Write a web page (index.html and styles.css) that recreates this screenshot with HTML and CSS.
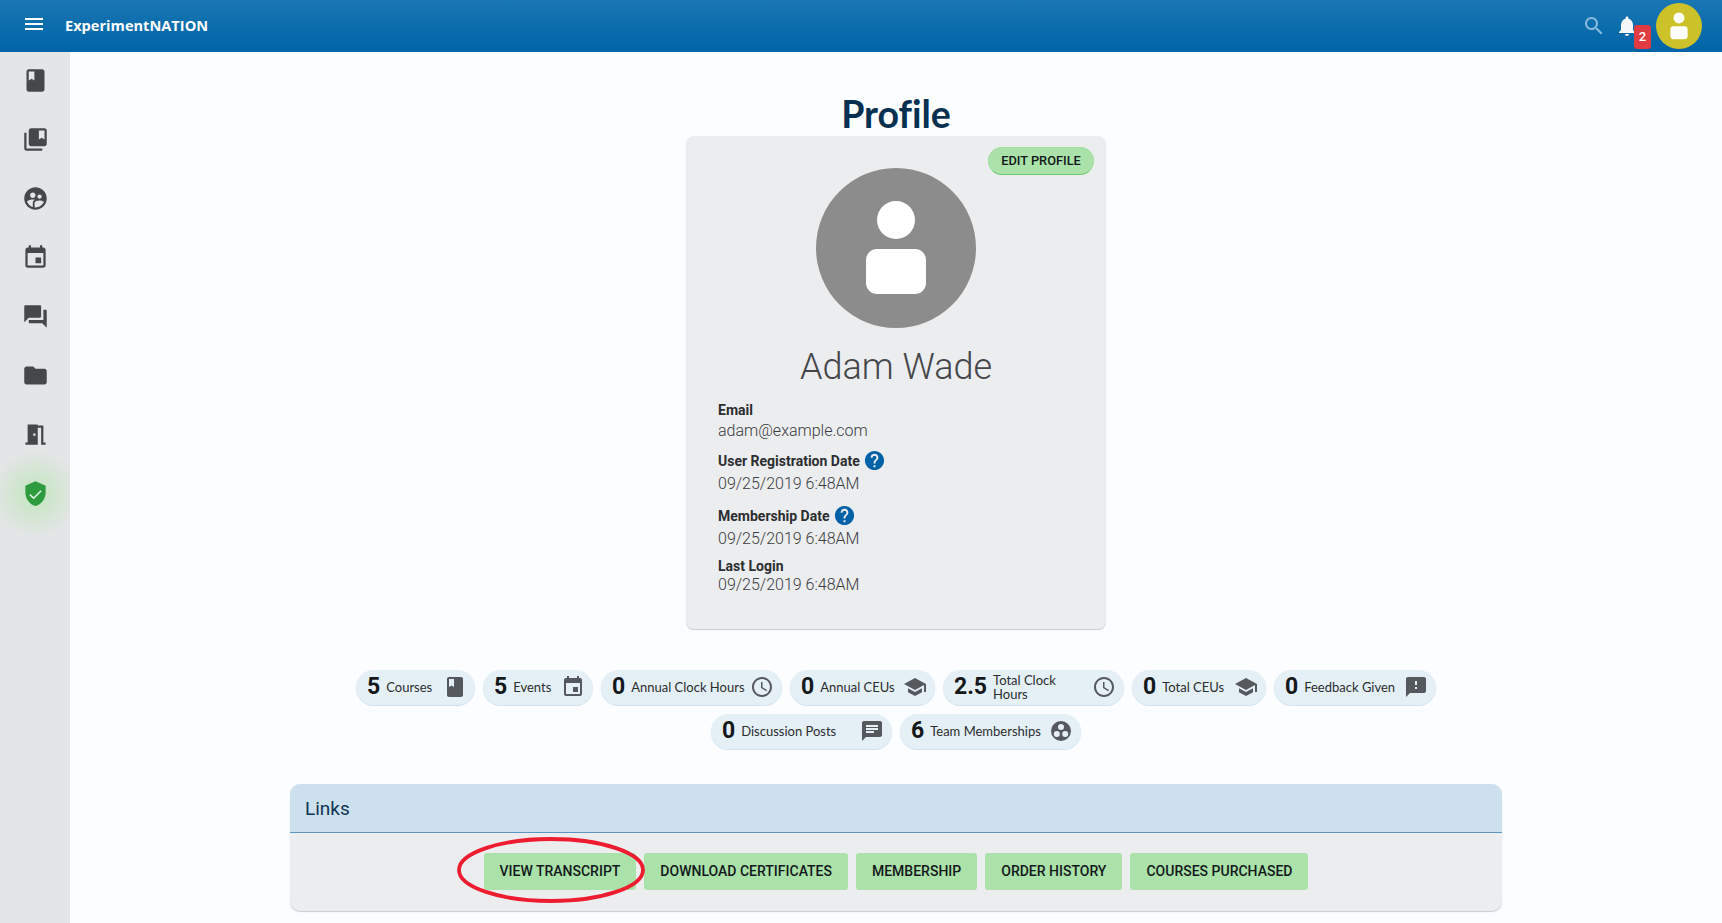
FILE: index.html
```html
<!DOCTYPE html>
<html>
    <head>
        <title>Profile</title>
        <link rel="stylesheet" href="styles.css">
    </head>

    <body>
        <!--Icons used more than once-->
        <svg class="ICON_SET">
            <symbol id="i-book" viewBox="0 0 24 24"><path d="M18 2H6c-1.1 0-2 .9-2 2v16c0 1.1.9 2 2 2h12c1.1 0 2-.9 2-2V4c0-1.1-.9-2-2-2zM6 4h5v8l-2.5-1.5L6 12V4z"/></symbol>
            <symbol id="i-event" viewBox="0 0 24 24"><path d="M17 12h-5v5h5v-5zM16 1v2H8V1H6v2H5c-1.11 0-1.99.9-1.99 2L3 19c0 1.1.89 2 2 2h14c1.1 0 2-.9 2-2V5c0-1.1-.9-2-2-2h-1V1h-2zm3 18H5V8h14v11z"/></symbol>
            <symbol id="i-clock" viewBox="0 0 24 24"><path d="M11.99 2C6.47 2 2 6.48 2 12s4.47 10 9.99 10C17.52 22 22 17.52 22 12S17.52 2 11.99 2zM12 20c-4.42 0-8-3.58-8-8s3.58-8 8-8 8 3.58 8 8-3.58 8-8 8z"/><path d="M12.5 7H11v6l5.25 3.15.75-1.23-4.5-2.67z"/></symbol>
            <symbol id="i-school" viewBox="0 0 24 24"><path d="M5 13.18v4L12 21l7-3.82v-4L12 17l-7-3.82zM12 3L1 9l11 6 9-4.91V17h2V9L12 3z"/></symbol>
            <symbol id="i-help" viewBox="0 0 24 24"><path d="M12 2C6.48 2 2 6.48 2 12s4.48 10 10 10 10-4.48 10-10S17.52 2 12 2zm1 17h-2v-2h2v2zm2.07-7.75l-.9.92C13.45 12.9 13 13.5 13 15h-2v-.5c0-1.1.45-2.1 1.17-2.83l1.24-1.26c.37-.36.59-.86.59-1.41 0-1.1-.9-2-2-2s-2 .9-2 2H8c0-2.21 1.79-4 4-4s4 1.79 4 4c0 .88-.36 1.68-.93 2.25z"/></symbol>
            <symbol id="i-person" viewBox="0 0 160 160"><circle cx="80" cy="52" r="19"/><rect x="50" y="81" width="60" height="45" rx="11"/></symbol>
        </svg>

        <!--Top bar-->
        <div class="TOP_BAR">
            <svg class="TOP_MENU" viewBox="0 0 24 24"><path d="M3 18h18v-2H3v2zm0-5h18v-2H3v2zm0-7v2h18V6H3z"/></svg>
            <div class="TOP_TITLE">ExperimentNATION</div>
            <svg class="TOP_SEARCH" viewBox="0 0 24 24"><path d="M15.5 14h-.79l-.28-.27C15.41 12.59 16 11.11 16 9.5 16 5.91 13.09 3 9.5 3S3 5.91 3 9.5 5.91 16 9.5 16c1.61 0 3.09-.59 4.23-1.57l.27.28v.79l5 4.99L20.49 19l-4.99-5zm-6 0C7.01 14 5 11.99 5 9.5S7.01 5 9.5 5 14 7.01 14 9.5 11.99 14 9.5 14z"/></svg>
            <div class="TOP_BELL">
                <svg viewBox="0 0 24 24"><path d="M12 22c1.1 0 2-.9 2-2h-4c0 1.1.89 2 2 2zm6-6v-5c0-3.07-1.64-5.64-4.5-6.32V4c0-.83-.67-1.5-1.5-1.5s-1.5.67-1.5 1.5v.68C7.63 5.36 6 7.92 6 11v5l-2 2v1h16v-1l-2-2z"/></svg>
                <div class="TOP_BADGE">2</div>
            </div>
            <svg class="TOP_AVATAR"><use href="#i-person"/></svg>
        </div>

        <div class="PAGE">
            <!--Left icon column-->
            <div class="SIDE_BAR">
                <div class="SIDE_ITEM"><svg><use href="#i-book"/></svg></div>
                <div class="SIDE_ITEM"><svg viewBox="0 0 24 24"><path d="M4 6H2v14c0 1.1.9 2 2 2h14v-2H4V6z"/><path d="M20 2H8c-1.1 0-2 .9-2 2v12c0 1.1.9 2 2 2h12c1.1 0 2-.9 2-2V4c0-1.1-.9-2-2-2zm0 10l-2.5-1.5L15 12V4h5v8z"/></svg></div>
                <div class="SIDE_ITEM"><svg viewBox="0 0 24 24"><path d="M11.99 2c-5.52 0-10 4.48-10 10s4.48 10 10 10 10-4.48 10-10-4.48-10-10-10zm3.61 6.34c1.07 0 1.93.86 1.93 1.93 0 1.07-.86 1.93-1.93 1.93-1.07 0-1.93-.86-1.93-1.93-.01-1.07.86-1.93 1.93-1.93zm-6-1.58c1.3 0 2.36 1.06 2.36 2.36 0 1.3-1.06 2.36-2.36 2.36s-2.36-1.06-2.36-2.36c0-1.31 1.05-2.36 2.36-2.36zm0 9.13v3.75c-2.4-.75-4.3-2.6-5.14-4.96 1.05-1.12 3.67-1.69 5.14-1.69.53 0 1.2.08 1.9.22-1.64.87-1.9 2.02-1.9 2.68zM11.99 20c-.27 0-.53-.01-.79-.04v-4.07c0-1.42 2.94-2.13 4.4-2.13 1.07 0 2.92.39 3.84 1.15-1.17 2.97-4.06 5.09-7.45 5.09z"/></svg></div>
                <div class="SIDE_ITEM"><svg><use href="#i-event"/></svg></div>
                <div class="SIDE_ITEM"><svg viewBox="0 0 24 24"><path d="M21 6h-2v9H6v2c0 .55.45 1 1 1h11l4 4V7c0-.55-.45-1-1-1zm-4 6V3c0-.55-.45-1-1-1H3c-.55 0-1 .45-1 1v14l4-4h10c.55 0 1-.45 1-1z"/></svg></div>
                <div class="SIDE_ITEM"><svg viewBox="0 0 24 24"><path d="M10 4H4c-1.1 0-1.99.9-1.99 2L2 18c0 1.1.9 2 2 2h16c1.1 0 2-.9 2-2V8c0-1.1-.9-2-2-2h-8l-2-2z"/></svg></div>
                <div class="SIDE_ITEM"><svg viewBox="0 0 24 24"><path d="M14 6v15H3v-2h2V3h9v1h5v15h2v2h-4V6h-3zm-4 5v2h2v-2h-2z"/></svg></div>
                <div class="SIDE_ITEM SIDE_ACTIVE"><svg viewBox="0 0 24 24"><path d="M12 1L3 5v6c0 5.55 3.84 10.74 9 12 5.16-1.26 9-6.45 9-12V5l-9-4z"/><path class="SIDE_CHECK" d="M7 13l3.4 3.2L17 9.6"/></svg></div>
            </div>

            <div class="CONTENT">
                <h1 class="PROFILE_TITLE">Profile</h1>

                <!--Profile card-->
                <div class="PROFILE_CARD">
                    <div class="EDIT_BUTTON">EDIT PROFILE</div>
                    <svg class="PROFILE_PHOTO"><use href="#i-person"/></svg>
                    <div class="PROFILE_NAME">Adam Wade</div>

                    <div class="FIELD">
                        <div class="FIELD_LABEL">Email</div>
                        <div class="FIELD_VALUE">adam@example.com</div>
                    </div>
                    <div class="FIELD FIELD_REGISTERED">
                        <div class="FIELD_LABEL FIELD_HELP">User Registration Date <svg><use href="#i-help"/></svg></div>
                        <div class="FIELD_VALUE">09/25/2019 6:48AM</div>
                    </div>
                    <div class="FIELD FIELD_MEMBER">
                        <div class="FIELD_LABEL FIELD_HELP">Membership Date <svg><use href="#i-help"/></svg></div>
                        <div class="FIELD_VALUE">09/25/2019 6:48AM</div>
                    </div>
                    <div class="FIELD FIELD_LOGIN">
                        <div class="FIELD_LABEL">Last Login</div>
                        <div class="FIELD_VALUE">09/25/2019 6:48AM</div>
                    </div>
                </div>

                <!--Counters under the card-->
                <div class="CHIPS">
                    <div class="CHIP CHIP_COURSES"><b>5</b><span>Courses</span><svg><use href="#i-book"/></svg></div>
                    <div class="CHIP CHIP_EVENTS"><b>5</b><span>Events</span><svg><use href="#i-event"/></svg></div>
                    <div class="CHIP CHIP_LONG"><b>0</b><span>Annual Clock Hours</span><svg><use href="#i-clock"/></svg></div>
                    <div class="CHIP CHIP_ACEU"><b>0</b><span>Annual CEUs</span><svg><use href="#i-school"/></svg></div>
                    <div class="CHIP CHIP_LONG"><b>2.5</b><span>Total Clock<br>Hours</span><svg><use href="#i-clock"/></svg></div>
                    <div class="CHIP CHIP_TCEU"><b>0</b><span>Total CEUs</span><svg><use href="#i-school"/></svg></div>
                    <div class="CHIP CHIP_FEEDBACK"><b>0</b><span>Feedback Given</span><svg viewBox="0 0 24 24"><path d="M20 2H4c-1.1 0-1.99.9-1.99 2L2 22l4-4h14c1.1 0 2-.9 2-2V4c0-1.1-.9-2-2-2zm-7 12h-2v-2h2v2zm0-4h-2V6h2v4z"/></svg></div>
                    <div class="CHIP CHIP_LONG"><b>0</b><span>Discussion Posts</span><svg viewBox="0 0 24 24"><path d="M20 2H4c-1.1 0-1.99.9-1.99 2L2 22l4-4h14c1.1 0 2-.9 2-2V4c0-1.1-.9-2-2-2zM6 9h12v2H6V9zm8 5H6v-2h8v2zm4-6H6V6h12v2z"/></svg></div>
                    <div class="CHIP CHIP_LONG"><b>6</b><span>Team Memberships</span><svg viewBox="0 0 24 24"><path fill-rule="evenodd" d="M12 2a10 10 0 1 0 0 20a10 10 0 0 0 0-20zM12 5a3 3 0 1 1 0 6a3 3 0 0 1 0-6zM7.8 12a3 3 0 1 1 0 6a3 3 0 0 1 0-6zM16.2 12a3 3 0 1 1 0 6a3 3 0 0 1 0-6z"/></svg></div>
                </div>

                <!--Links panel-->
                <div class="LINKS">
                    <div class="LINKS_HEAD">Links</div>
                    <div class="LINKS_BODY">
                        <div class="LINK_BUTTON">VIEW TRANSCRIPT</div>
                        <div class="LINK_BUTTON">DOWNLOAD CERTIFICATES</div>
                        <div class="LINK_BUTTON">MEMBERSHIP</div>
                        <div class="LINK_BUTTON">ORDER HISTORY</div>
                        <div class="LINK_BUTTON">COURSES PURCHASED</div>
                    </div>
                    <!--Red circle drawn over the first button-->
                    <svg class="LINKS_MARK" viewBox="0 0 188 66"><ellipse cx="94" cy="33" rx="92" ry="31"/></svg>
                </div>
            </div>
        </div>
    </body>
</html>
```

FILE: styles.css
```css
/*Header blue: #0064A7*/
/*Button green: #AAE2A9*/
html, body {
    height: 100%;
}
body {
    display: flex;
    flex-direction: column;
    margin: 0;
    overflow: hidden;
    font-family: Roboto, sans-serif;
    background-color: #FCFDFE;
}
.ICON_SET {
    display: none;
}
/*Set up top bar*/
.TOP_BAR {
    display: flex;
    flex: none;
    align-items: center;
    height: 52px;
    padding-left: 22px;
    padding-right: 20px;
    background: linear-gradient(#1A77B3, #0064A7);
    color: white;
}
.TOP_MENU {
    width: 24px;
    height: 24px;
    margin-top: -4px;
    fill: white;
}
.TOP_TITLE {
    flex: 1;
    margin-left: 19px;
    margin-top: -2px;
    font-family: "Open Sans", sans-serif;
    font-size: 14.6px;
    font-weight: 700;
}
.TOP_SEARCH {
    width: 24px;
    height: 24px;
    fill: #8ABBDD;
}
.TOP_BELL {
    position: relative;
    width: 24px;
    height: 24px;
    margin-left: 9px;
    margin-right: 17px;
    fill: #F5F6F7;
}
.TOP_BELL svg {
    width: 24px;
    height: 24px;
}
.TOP_BADGE {
    position: absolute;
    left: 19px;
    top: 11px;
    width: 17px;
    height: 24px;
    border-radius: 3px;
    background-color: #E03A42;
    font-size: 13px;
    font-weight: 500;
    line-height: 24px;
    text-align: center;
}
.TOP_AVATAR {
    width: 46px;
    height: 46px;
    border-radius: 50%;
    background-color: #CDC12A;
    fill: white;
}
/*Set up sidebar and content*/
.PAGE {
    display: flex;
    flex: 1;
    min-height: 0;
}
.SIDE_BAR {
    flex: none;
    width: 70px;
    background-color: #E4E5E7;
}
.SIDE_ITEM {
    display: flex;
    align-items: center;
    justify-content: center;
    height: 59px;
    fill: #45474B;
}
.SIDE_ITEM svg {
    width: 27px;
    height: 27px;
    margin-top: -2px;
}
.SIDE_ACTIVE {
    height: 90px;
    margin-top: -16px;
    background: radial-gradient(circle at 35px 45px, #CBE6C8 0, #CBE6C8 12px, rgba(203, 230, 200, 0) 44px);
    fill: #2E9B3E;
}
.SIDE_CHECK {
    fill: none;
    stroke: #E4F2E2;
    stroke-width: 1.4;
}
.CONTENT {
    display: flex;
    flex: 1;
    flex-direction: column;
    align-items: center;
    padding-top: 40px;
}
.PROFILE_TITLE {
    margin: 0;
    font-family: Lato, sans-serif;
    font-size: 37.5px;
    font-weight: 700;
    font-variant-ligatures: none;
    line-height: 44px;
    color: #05304F;
}
/*Set up profile card*/
.PROFILE_CARD {
    position: relative;
    box-sizing: border-box;
    width: 420px;
    padding: 32px 32px 33px 32px;
    border-radius: 8px;
    background-color: #ECEDEF;
    box-shadow: 0 1px 1px #C8CACC;
}
.EDIT_BUTTON {
    position: absolute;
    top: 11px;
    right: 12px;
    box-sizing: border-box;
    width: 106px;
    height: 28px;
    border-radius: 14px;
    border: 1px solid #A0DE9F;
    border-bottom-color: #6BC96B;
    background-color: #AAE2A9;
    font-size: 12.8px;
    font-weight: 500;
    line-height: 26px;
    text-align: center;
    color: #12181C;
}
.PROFILE_PHOTO {
    display: block;
    width: 160px;
    height: 160px;
    margin: auto;
    border-radius: 50%;
    background-color: #8C8C8C;
    fill: white;
}
.PROFILE_NAME {
    margin-top: 19px;
    margin-bottom: 13px;
    font-size: 36px;
    font-weight: 300;
    line-height: 40px;
    text-align: center;
    color: #444649;
}
/*Rows of the card are not evenly spaced*/
.FIELD_REGISTERED {
    margin-top: 7px;
}
.FIELD_MEMBER {
    margin-top: 9px;
}
.FIELD_LOGIN {
    margin-top: 6px;
}
.FIELD_LOGIN .FIELD_VALUE {
    margin-top: -2px;
}
.FIELD_LABEL {
    font-size: 14px;
    font-weight: 700;
    line-height: 20px;
    color: #2B2D30;
}
.FIELD_HELP {
    display: flex;
    align-items: center;
    gap: 3px;
    height: 24px;
    fill: #0063A7;
}
.FIELD_HELP svg {
    width: 23px;
    height: 23px;
    margin-top: -1px;
}
.FIELD_VALUE {
    font-size: 16px;
    font-weight: 300;
    line-height: 22px;
    color: #3A3C3F;
}
/*Set up counters*/
.CHIPS {
    display: flex;
    flex-wrap: wrap;
    justify-content: center;
    gap: 9px 8px;
    width: 1212px;
    margin-top: 41px;
}
.CHIP {
    display: flex;
    align-items: center;
    box-sizing: border-box;
    height: 35px;
    padding-left: 11px;
    padding-right: 8px;
    padding-bottom: 2px;
    border-radius: 18px;
    background-color: #E5F0F6;
    box-shadow: 0 1px 1px #CFE1EE;
    font-family: Lato, sans-serif;
    font-size: 13px;
    line-height: 14px;
    color: #2B2D30;
    fill: #55595E;
}
.CHIP b {
    margin-right: 6px;
    font-family: Roboto, sans-serif;
    font-size: 23px;
    font-weight: 700;
    color: #14181C;
}
.CHIP span {
    flex: 1;
}
.CHIP svg {
    flex: none;
    width: 24px;
    height: 24px;
}
.CHIP_COURSES { width: 119px; }
.CHIP_EVENTS { width: 110px; }
.CHIP_LONG { width: 181px; }
.CHIP_ACEU { width: 145px; }
.CHIP_TCEU { width: 134px; }
.CHIP_FEEDBACK { width: 162px; }
/*Set up links panel*/
.LINKS {
    position: relative;
    width: 1212px;
    margin-top: 35px;
    border-radius: 10px;
    background-color: #ECEDEF;
    box-shadow: 0 1px 1px #C8CACC;
}
.LINKS_HEAD {
    height: 48px;
    padding-left: 15px;
    border-radius: 10px 10px 0 0;
    border-bottom: 1px solid #5A96C1;
    background-color: #CDE0ED;
    font-size: 19px;
    line-height: 49px;
    color: #0F3553;
}
.LINKS_BODY {
    display: flex;
    justify-content: center;
    gap: 8px;
    padding-top: 20px;
    padding-bottom: 21px;
}
.LINK_BUTTON {
    height: 37px;
    padding-left: 16px;
    padding-right: 16px;
    border-radius: 3px;
    background-color: #AAE2A9;
    font-size: 14px;
    font-weight: 500;
    line-height: 37px;
    color: #14181C;
}
.LINKS_MARK {
    position: absolute;
    left: 167px;
    top: 53px;
    width: 188px;
    height: 66px;
    fill: none;
    stroke: #ED1C2E;
    stroke-width: 3.8;
}
```
